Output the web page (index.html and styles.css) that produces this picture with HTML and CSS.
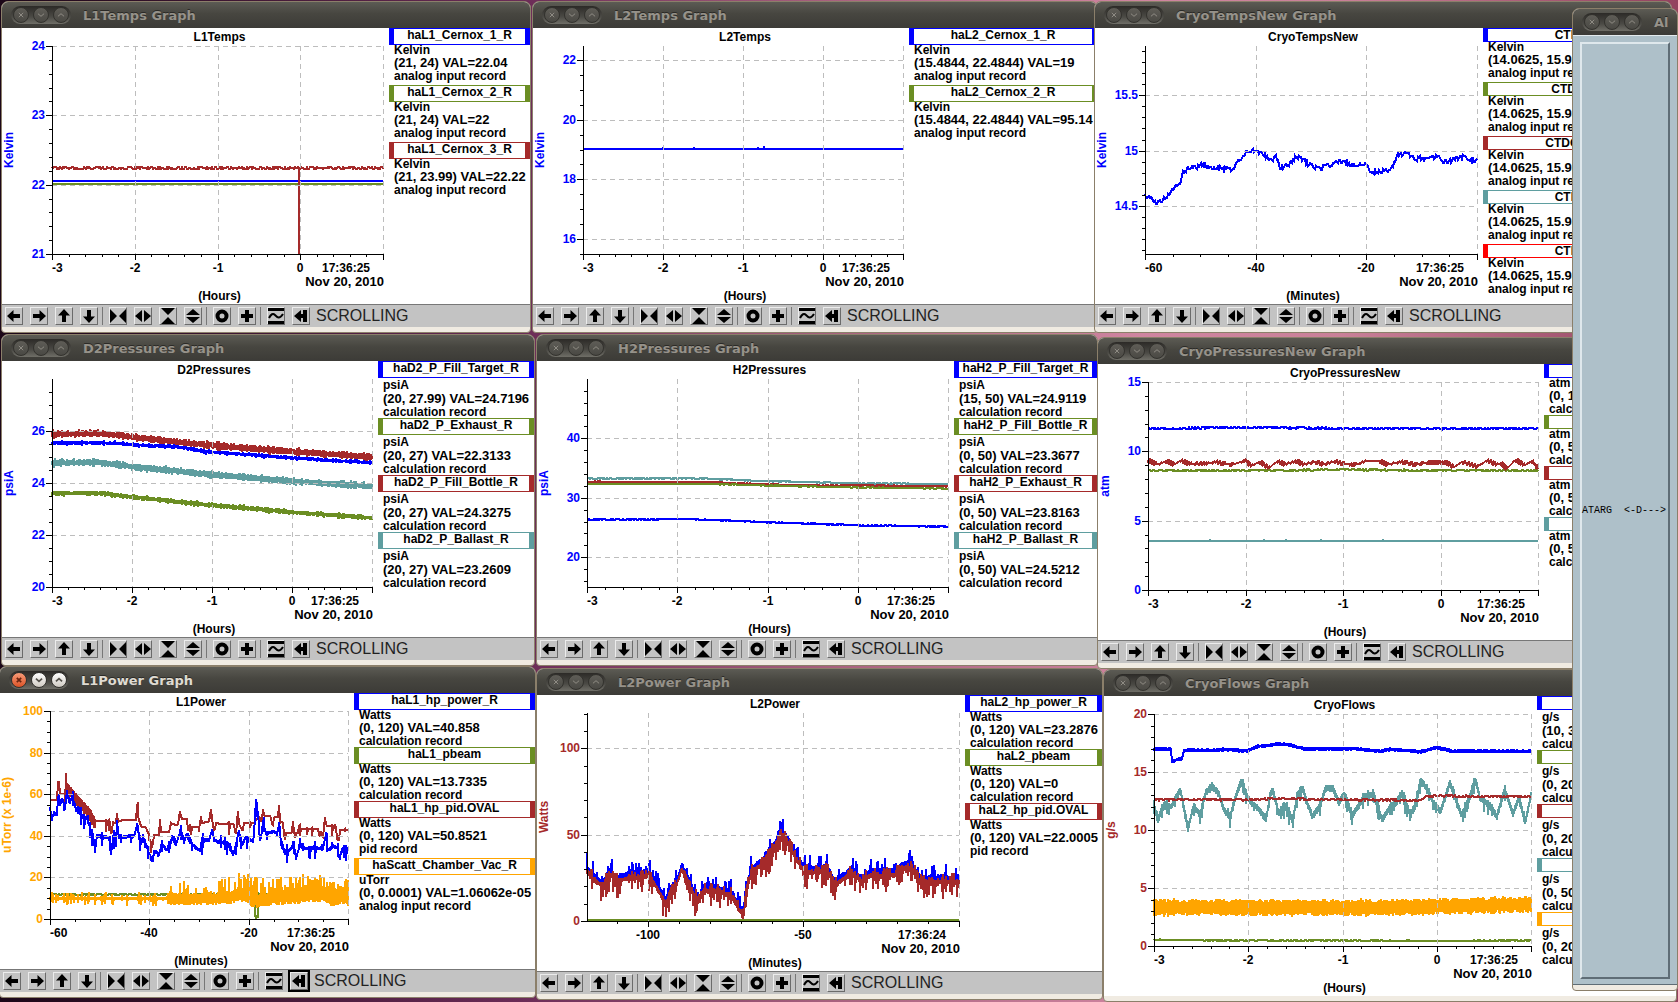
FILE: index.html
```
<!DOCTYPE html>
<html lang="en">
<head>
    <meta charset="UTF-8">
    <meta name="viewport" content="width=device-width, initial-scale=1.0">
    <title>Cryo Target Strip Charts</title>
    <link rel="stylesheet" href="styles.css">
</head>
<body>
    <main class="desktop" id="desktop">
        <section class="window alarm">
            <header class="titlebar">
                <div class="controls">
                    <button class="control" aria-label="Close"><svg viewBox="0 0 16 16"><path d="M5.5 5.5l5 5M10.5 5.5l-5 5"/></svg></button>
                    <button class="control" aria-label="Minimize"><svg viewBox="0 0 16 16"><path d="M4.500 6.500l3.500 3 3.500-3"/></svg></button>
                    <button class="control" aria-label="Maximize"><svg viewBox="0 0 16 16"><path d="M4.500 9.500l3.500-3 3.500 3"/></svg></button>
                </div>
                <h2 class="title">Al</h2>
            </header>
            <div class="alarm-body">
                <pre class="alarm-list">ATARG  &lt;-D---&gt;</pre>
            </div>
            <div class="window-foot"></div>
        </section>
    </main>

    <script src="charts.js"></script>
</body>
</html>
```
FILE: styles.css
```
* {
    box-sizing: border-box;
}
body {
    margin: 0;
    height: 100vh;
    overflow: hidden;
    font-family: "Liberation Sans", Arial, sans-serif;
    font-size: 12px;
    color: #000;
}
.desktop {
    position: relative;
    height: 100%;
    overflow: hidden;
    background: linear-gradient(90deg, #1c0718 0%, #2a0d22 6%, #6b2c57 31%, #a9627f 50%, #cf85a0 68%, #c98098 80%, #93425f 100%);
}

/* windows */
.window {
    position: absolute;
    display: flex;
    flex-direction: column;
    border: 1px solid #8b7f6a;
    border-radius: 7px 7px 4px 4px;
    background: #f0ebe2;
    overflow: hidden;
}
.titlebar {
    display: flex;
    align-items: center;
    gap: 12px;
    height: 26px;
    padding-left: 9px;
    background: linear-gradient(#5c5b54, #474640 45%, #3c3b37);
    flex: none;
}
.controls {
    display: flex;
    gap: 4px;
    padding: 1px 2px;
    height: 18px;
    border-radius: 9px;
    background: linear-gradient(#2c2a27, #4b4a45 60%, #6f6e67);
    flex: none;
}
.control {
    width: 16px;
    height: 16px;
    padding: 0;
    border: 1px solid #33322e;
    border-radius: 50%;
    background: linear-gradient(#5f5d57, #4a4944);
}
.control svg {
    display: block;
    width: 14px;
    height: 14px;
    fill: none;
    stroke: #97948b;
    stroke-width: 1;
}
.title {
    margin: 0;
    font-family: "DejaVu Sans", sans-serif;
    font-size: 13px;
    font-weight: bold;
    color: #96928a;
    text-shadow: 0 -1px 0 #2b2a27;
    white-space: nowrap;
}
.window.active .title {
    color: #dfdbd2;
}
.window.active .control {
    background: linear-gradient(#fff, #cfcac2);
}
.window.active .control svg {
    stroke: #55524c;
    stroke-width: 2;
}
.window.active .control:first-child {
    background: linear-gradient(#f79b78, #dd5327);
}
.window.active .control:first-child svg {
    stroke: #6b2410;
}
.window-body {
    display: flex;
    background: #fff;
}
.window-foot {
    height: 5px;
    flex: none;
}

/* strip chart */
.chart {
    flex: 1;
    min-width: 0;
    display: block;
}
.chart text {
    font-size: 12px;
    font-weight: bold;
}
.chart .date {
    font-size: 13px;
}
.mid {
    text-anchor: middle;
}
.end {
    text-anchor: end;
}
.axis {
    fill: none;
    stroke: #000;
    shape-rendering: crispEdges;
}
.grid {
    fill: none;
    stroke: #bdbdbd;
    stroke-dasharray: 5 4;
    shape-rendering: crispEdges;
}
.trace {
    fill: none;
    stroke-width: 2;
    shape-rendering: crispEdges;
}

/* legend */
.legend {
    flex: none;
    margin: 0;
    font-weight: bold;
    white-space: nowrap;
    overflow: hidden;
}
.name {
    height: 17px;
    border: 1px solid;
    border-width: 1px 5px;
    text-align: center;
    line-height: 12px;
}
.compact .name {
    height: 14px;
}
.name span {
    color: #000;
}
.legend p {
    margin: 0;
    padding-left: 5px;
}
.unit {
    line-height: 11px;
}
.tall .unit {
    line-height: 14px;
}
.range {
    font-size: 13px;
    line-height: 13px;
}
.record {
    line-height: 14px;
}

/* toolbar */
.toolbar {
    display: flex;
    align-items: center;
    height: 23px;
    padding-left: 3px;
    border-top: 1px solid #777;
    background: #c3c3c3;
}
.group {
    display: flex;
    gap: 7px;
}
.group + .group {
    margin-left: 5px;
    padding-left: 6px;
    box-shadow: -1px 0 0 #777;
}
.tool {
    width: 18px;
    height: 18px;
    padding: 0;
    border: 1px solid;
    border-color: #ececec #6b6b6b #6b6b6b #ececec;
    background: #c3c3c3;
}
.tool svg {
    display: block;
    width: 16px;
    height: 16px;
}
.tool.focused {
    outline: 2px solid #000;
}
.status {
    margin-left: 6px;
    font-size: 16px;
    color: #222;
}

/* alarm list, docked on the right edge over the charts */
.alarm {
    right: 0;
    top: 8px;
    width: 106px;
    height: 983px;
    z-index: 2;
}
.alarm-body {
    flex: 1;
    padding: 6px 7px 5px;
    background: #aec0c9;
    border-top: 1px solid #e4ebee;
    border-bottom: 1px solid #5f6d76;
    display: flex;
}
.alarm-list {
    flex: 1;
    margin: 0;
    display: flex;
    align-items: center;
    border: 2px solid;
    border-color: #dfe8ec #5f6d76 #5f6d76 #dfe8ec;
    font-family: "Liberation Mono", monospace;
    font-size: 10px;
}
```
FILE: charts.js
```
const BLUE = '#0000ff';
const GREEN = '#6b8e23';
const RED = '#a52a2a';
const TEAL = '#5f9ea0';
const ORANGE = '#ffa500';
const BRIGHT = '#ff0000';

const HOURS = { min: -3, max: 1, step: 1, minor: 0.2, last: 0, label: '(Hours)', time: '17:36:25' };
const MINUTES = { min: -60, max: 0, step: 20, minor: 5, last: -20, label: '(Minutes)', time: '17:36:25' };
const LONG = { min: -119.6, max: 0, step: 50, minor: 10, last: -50, label: '(Minutes)', time: '17:36:24' };

// legend row: colour, name, unit, range text, record type, row height
const row = (color, name, unit, range, record, h) => ({ color, name, unit, range, record, h });

const power = [-119.6,30,-117.4,25,-114.5,21,-112.1,28,-109.8,24,-106.2,26,-102.7,26,-99.8,28,-97.4,21,-94.2,11,-92.7,19,-90.9,21,-89.2,31,-87.4,25,-85,15,-83.3,13,-82.1,19,-76.8,18,-72.7,15,-70.9,8,-69.2,4,-68.4,18,-66.8,29,-62.7,35,-59.2,44,-56.8,51,-54.5,45,-52.1,36,-49.8,30,-46.2,29,-42.7,31,-39.8,22,-34.5,29,-31.5,24,-28,28,-25,27,-20.4,28,-18,32,-15,31,-12.1,23,-5.1,24,0,24];

// pts is a flat list: time, value, time, value ...
// lo/hi: random excursion under/over the line, up/down: occasional spikes
const charts = [
    {
        title: 'L1Temps', x: 1, y: 1, w: 530, legend: 141, unit: 'Kelvin', axisColor: BLUE,
        time: HOURS, min: 21, max: 24, step: 1, minor: 0.2,
        rows: [
            row(BLUE, 'haL1_Cernox_1_R', 'Kelvin', '(21, 24) VAL=22.04', 'analog input record', 57),
            row(GREEN, 'haL1_Cernox_2_R', 'Kelvin', '(21, 24) VAL=22', 'analog input record', 57),
            row(RED, 'haL1_Cernox_3_R', 'Kelvin', '(21, 23.99) VAL=22.22', 'analog input record', 57)
        ],
        series: [
            { color: GREEN, pts: [-3,22.01,1,22.01], lo: 0, hi: 0 },
            { color: BLUE, pts: [-3,22.055,1,22.055], lo: 0, hi: 0 },
            { color: RED, pts: [-3,22.24,1,22.24], lo: 0.01, hi: 0.01 },
            { color: RED, pts: [-0.02,22.24,-0.0199,21], drop: true }
        ]
    },
    {
        title: 'L2Temps', x: 532, y: 1, w: 566, legend: 188, unit: 'Kelvin', axisColor: BLUE,
        time: HOURS, min: 15.4844, max: 22.4844, step: 2, minor: 0.5,
        rows: [
            row(BLUE, 'haL2_Cernox_1_R', 'Kelvin', '(15.4844, 22.4844) VAL=19', 'analog input record', 57),
            row(GREEN, 'haL2_Cernox_2_R', 'Kelvin', '(15.4844, 22.4844) VAL=95.14', 'analog input record', 57)
        ],
        series: [{ color: BLUE, pts: [-3,19.03,1,19.03], lo: 0, hi: 0, up: 0.05, down: 0, chance: 0.04 }]
    },
    {
        title: 'CryoTempsNew', x: 1094, y: 1, w: 578, legend: 188, unit: 'Kelvin', axisColor: BLUE, size: 'compact',
        time: MINUTES, min: 14.0625, max: 15.9475, step: 0.5, minor: 0.1,
        rows: [
            row(BLUE, 'CTD101', 'Kelvin', '(14.0625, 15.9375) VAL=14.9', 'analog input record', 54),
            row(GREEN, 'CTD1020', 'Kelvin', '(14.0625, 15.9375) VAL=14.9', 'analog input record', 54),
            row(RED, 'CTDOUT10', 'Kelvin', '(14.0625, 15.9375) VAL=14.9', 'analog input record', 54),
            row(TEAL, 'CTD103', 'Kelvin', '(14.0625, 15.9375) VAL=14.9', 'analog input record', 54),
            row(BRIGHT, 'CTD104', 'Kelvin', '(14.0625, 15.9375) VAL=14.9', 'analog input record', 54)
        ],
        series: [{
            color: BLUE, lo: 0.012, hi: 0.012, up: 0.02, down: 0.02, chance: 0.25,
            pts: [-60,14.6,-59.2,14.58,-58,14.52,-56.1,14.58,-54.1,14.7,-53.6,14.71,-53.2,14.8,-52.3,14.84,-49.4,14.87,-48,14.84,-46.3,14.85,-44.4,14.83,-43.3,14.89,-42.1,14.97,-41.2,15,-40.2,14.99,-38.5,14.97,-37.2,14.9,-36.3,14.95,-35.5,14.84,-34.1,14.88,-32.2,14.94,-30.8,14.9,-29.2,14.84,-26.6,14.87,-24.7,14.9,-22.6,14.87,-20.2,14.88,-19.3,14.82,-18,14.81,-16.8,14.83,-15.6,14.81,-14.4,14.96,-12.4,14.97,-11.6,14.93,-9,14.92,-7.3,14.95,-6,14.9,-3.7,14.93,-2.2,14.96,-1.2,14.91,0,14.9]
        }]
    },
    {
        title: 'D2Pressures', x: 1, y: 334, w: 534, legend: 156, unit: 'psiA', axisColor: BLUE, size: 'tall',
        time: HOURS, min: 20, max: 27.99, step: 2, minor: 0.5,
        rows: [
            row(BLUE, 'haD2_P_Fill_Target_R', 'psiA', '(20, 27.99) VAL=24.7196', 'calculation record', 57),
            row(GREEN, 'haD2_P_Exhaust_R', 'psiA', '(20, 27) VAL=22.3133', 'calculation record', 57),
            row(RED, 'haD2_P_Fill_Bottle_R', 'psiA', '(20, 27) VAL=24.3275', 'calculation record', 57),
            row(TEAL, 'haD2_P_Ballast_R', 'psiA', '(20, 27) VAL=23.2609', 'calculation record', 57)
        ],
        series: [
            { color: TEAL, pts: [-3,24.77,-2.4,24.79,-2,24.62,-1,24.32,0,24.06,1,23.87], lo: 0.12, hi: 0.12, up: 0.07, down: 0.07, chance: 0.4, band: true },
            { color: GREEN, pts: [-3,23.6,-2.4,23.6,-2,23.46,-1,23.14,0,22.88,1,22.65], lo: 0.09, hi: 0.09, up: 0.05, down: 0.05, chance: 0.4, band: true },
            { color: RED, pts: [-3,25.88,-2.45,25.9,-2,25.77,-1.5,25.58,-1,25.44,0,25.2,1,25], lo: 0.12, hi: 0.12, up: 0.07, down: 0.07, chance: 0.4, band: true },
            { color: BLUE, pts: [-3,25.54,-2.2,25.52,-2,25.47,-1.4,25.37,-1.07,25.2,0,24.96,1,24.77], lo: 0.07, hi: 0.07, up: 0.05, down: 0.05, chance: 0.3, band: true }
        ]
    },
    {
        title: 'H2Pressures', x: 536, y: 334, w: 562, legend: 143, unit: 'psiA', axisColor: BLUE, size: 'tall',
        time: HOURS, min: 15, max: 49.99, step: 10, minor: 2,
        rows: [
            row(BLUE, 'haH2_P_Fill_Target_R', 'psiA', '(15, 50) VAL=24.9119', 'calculation record', 57),
            row(GREEN, 'haH2_P_Fill_Bottle_R', 'psiA', '(0, 50) VAL=23.3677', 'calculation record', 57),
            row(RED, 'haH2_P_Exhaust_R', 'psiA', '(0, 50) VAL=23.8163', 'calculation record', 57),
            row(TEAL, 'haH2_P_Ballast_R', 'psiA', '(0, 50) VAL=24.5212', 'calculation record', 57)
        ],
        series: [
            { color: TEAL, pts: [-3,33.24,-1.7,33.24,-1,32.8,0,32.45,1,32.3], lo: 0.05, hi: 0.05 },
            { color: RED, pts: [-3,32.7,-1.7,32.65,-0.8,32.15,1,31.95], lo: 0.06, hi: 0.06 },
            { color: GREEN, pts: [-3,32.35,-1.7,32.35,-0.4,31.85,1,31.55], lo: 0.05, hi: 0.05 },
            { color: BLUE, pts: [-3,26.3,-1.9,26.45,-1,25.9,0,25.4,1,25.15], lo: 0.06, hi: 0.06 }
        ]
    },
    {
        title: 'CryoPressuresNew', x: 1097, y: 337, w: 576, legend: 128, unit: 'atm', axisColor: BLUE, size: 'compact',
        time: HOURS, min: 0, max: 15, step: 5, minor: 1,
        rows: [
            row(BLUE, '', 'atm', '(0, 15', 'calc', 51),
            row(GREEN, '', 'atm', '(0, 50', 'calc', 51),
            row(RED, '', 'atm', '(0, 50', 'calc', 51),
            row(TEAL, '', 'atm', '(0, 50', 'calc', 51)
        ],
        series: [
            { color: BLUE, pts: [-3,11.65,-2,11.72,-1,11.66,0,11.62,1,11.64], lo: 0.05, hi: 0.05 },
            { color: GREEN, pts: [-3,8.6,-2,8.62,-1,8.66,1,8.6], lo: 0.04, hi: 0.05 },
            { color: TEAL, pts: [-3,3.53,1,3.53], lo: 0, hi: 0, up: 0.1, down: 0, chance: 0.08 },
            { color: RED, pts: [-3,9.35,-2.9,9.05,-2.81,9.3,-2.73,9.05,-2.66,9.35,-2.58,9.1,-2.4,9.1,-2.3,9.25,-2.22,9.1,-2.13,9.05,-2,9.35,-1.94,8.95,-1.85,9.25,-1.76,8.8,-1.67,9.3,-1.6,9.05,-1.48,9.3,-1.4,9.05,-1.29,9.25,-1.2,9.05,-1.08,9.3,-1,9.1,-0.86,9.05,-0.77,9.3,-0.62,9.3,-0.55,9.05,-0.4,9.25,-0.26,9.05,-0.12,9.2,0.06,9.2,0.14,8.85,0.22,9.25,0.38,8.9,0.48,9.35,0.58,9.05,0.62,9.15,0.68,8.75,0.77,9.4,0.86,9,0.94,9.3,1,8.8], lo: 0.07, hi: 0.07, band: true }
        ]
    },
    {
        title: 'L1Power', x: -1, y: 666, w: 537, legend: 181, unit: 'uTorr (x 1e-6)', axisColor: ORANGE, active: true,
        time: MINUTES, min: 0, max: 100, step: 20, minor: 5,
        rows: [
            row(BLUE, 'haL1_hp_power_R', 'Watts', '(0, 120) VAL=40.858', 'calculation record', 54),
            row(GREEN, 'haL1_pbeam', 'Watts', '(0, 120) VAL=13.7335', 'calculation record', 54),
            row(RED, 'haL1_hp_pid.OVAL', 'Watts', '(0, 120) VAL=50.8521', 'pid record', 57),
            row(ORANGE, 'haScatt_Chamber_Vac_R', 'uTorr', '(0, 0.0001) VAL=1.06062e-05', 'analog input record', 57)
        ],
        series: [
            { color: RED, pts: [-60,57,-58.6,57,-58.5,66,-58.2,66,-58,60,-57,60,-56.8,69,-56.6,64,-56.2,63,-54,57,-52,52,-51,47], lo: 5, hi: 1.5, band: true, from: -57 },
            { color: RED, pts: [-51,47,-47.9,47,-47.8,41,-47.6,41,-47.5,46,-46.7,46,-46.6,53,-46.5,46.5,-45.6,47.5,-42.7,47.5,-42.5,55,-42.3,55,-42.2,48,-41.6,44,-40.8,44,-40.2,41,-39.7,36,-39.3,36,-39.2,40.5,-38,40.5,-37.9,48,-37.7,42,-36,42,-35.7,46,-34.3,45,-33.8,53,-33.6,48,-32.4,48,-32.2,40,-32,46,-31.8,44,-29.9,44,-29.7,51,-29.5,46,-28,47,-27.6,53,-27.4,48,-26.9,41,-26.7,46,-23,45.5,-22.6,40,-22.4,46,-22.2,53,-22,46,-21.2,42,-21,46,-18.9,46,-18.4,48,-17.3,48,-17.1,54,-16.9,49.5,-15.6,49.5,-15.2,44,-14.9,49,-14.1,49,-13.9,55,-13.7,47,-13,46,-12.8,36,-12.5,41.5,-11.3,41.5,-11.1,48,-11,41.5,-10,41.5,-9.8,47,-9.6,43.5,-6,43.5,-5.7,38,-5.5,43,-5.1,38,-4.9,43,-4.6,50,-4.4,44.5,-2.4,44.5,-2.2,38,-1.8,38,-1.7,43,0,43], lo: 0, hi: 0, down: 6, up: 1.5, chance: 0.07, band: true },
            { color: BLUE, pts: [-60,53,-59.6,48,-59.2,51,-58.6,50,-58.3,62,-58,55,-57.5,58,-57,53,-56.6,61,-56,56,-55.5,59,-54.8,53,-54,51,-53,48,-52.4,49,-51.8,41,-51.2,39,-50.9,32,-50.6,40,-48,39,-47.7,31,-47.3,39,-46.7,40,-46.5,47,-46.2,39,-43,40,-42.4,46,-42,38,-41,38,-40,31,-39.4,28,-39,33,-38,31,-37.5,36,-36.5,33,-35.8,35,-35.4,40,-34.6,36,-33.6,43,-33,37,-32.5,41,-31.5,36,-30.5,34,-29.8,33,-29.2,38,-28,38,-27.3,43,-27,38,-26,37,-24,36,-23.2,31,-22.6,34,-22,43,-21.5,35,-20.6,39,-19,37,-18.6,55,-18.1,51,-17.8,38,-17.4,40,-17.1,47,-16.5,41,-15,42,-14.2,41,-13.9,46,-13.5,37,-12.6,31,-12,33,-11.3,34,-11,38,-10.5,29,-9.6,36,-9,34,-5,34,-4.4,41,-4,33,-3,35,-2,34,-1.7,28,-1.3,33,0,34], lo: 1, hi: 1, down: 5, up: 3, chance: 0.18, band: true },
            { color: GREEN, pts: [-60,11.7,-18.9,11.7,-18.8,1,-18.1,1,-18,11.7,0,12], lo: 0.4, hi: 0.4 },
            { color: ORANGE, pts: [-60,10,-36,9.8], lo: 1, hi: 0.8, down: 3, up: 2.5, chance: 0.35, band: true },
            { color: ORANGE, pts: [-36,9.5,-24,10], lo: 3, hi: 3, down: 0, up: 7, chance: 0.4, band: true },
            { color: ORANGE, pts: [-24,10,-22,12,-20,11,-19.5,9,-17,9,-15.5,10], lo: 3.5, hi: 3, down: 0, up: 9, chance: 0.5, band: true },
            { color: ORANGE, pts: [-15.5,10.5,-10,11,-7,12,-5,12,-3,10,-1.5,11,0,10], lo: 4, hi: 5, down: 0, up: 6, chance: 0.5, band: true }
        ]
    },
    {
        title: 'L2Power', x: 536, y: 668, w: 567, legend: 137, unit: 'Watts', axisColor: RED,
        time: LONG, min: 0, max: 120.4, step: 50, minor: 10,
        rows: [
            row(BLUE, 'haL2_hp_power_R', 'Watts', '(0, 120) VAL=23.2876', 'calculation record', 54),
            row(GREEN, 'haL2_pbeam', 'Watts', '(0, 120) VAL=0', 'calculation record', 54),
            row(RED, 'haL2_hp_pid.OVAL', 'Watts', '(0, 120) VAL=22.0005', 'pid record', 57)
        ],
        series: [
            { color: BLUE, pts: power, lo: 1, hi: 3, down: 0, up: 7, chance: 0.25, band: true },
            { color: RED, pts: power, lo: 3, hi: 0, down: 9, up: 4, chance: 0.4, band: true },
            { color: GREEN, pts: [-119.6,0.5,0,0.5], lo: 0, hi: 0 }
        ]
    },
    {
        title: 'CryoFlows', x: 1103, y: 669, w: 574, legend: 139, unit: 'g/s', axisColor: RED, size: 'compact tall', height: 300, bare: true,
        time: HOURS, min: 0, max: 20, step: 5, minor: 1,
        rows: [
            row(BLUE, '', 'g/s', '(10, 30) VAL=16.8', 'calculation record', 54),
            row(GREEN, '', 'g/s', '(0, 20) VAL=0.4', 'calculation record', 54),
            row(RED, '', 'g/s', '(0, 20) VAL=12.9', 'calculation record', 54),
            row(TEAL, '', 'g/s', '(0, 50) VAL=12.4', 'calculation record', 54),
            row(ORANGE, '', 'g/s', '(0, 20) VAL=3.6', 'calculation record', 54)
        ],
        series: [
            { color: BLUE, pts: [-3,16.97,-2.82,16.97,-2.81,15.9,-2.7,16.2,-2.68,16.9,-2.4,16.85,-2.25,16.95,-2.01,16.8,-1.9,17.2,-1.7,17.4,-1.56,17.35,-1.4,16.97,-0.86,17,-0.6,16.8,-0.5,16.95,-0.17,16.75,0,17.1,0.16,16.8,1,16.78], lo: 0.18, hi: 0.18, band: true },
            { color: TEAL, lo: 0.35, hi: 0.3, down: 0.8, up: 0.3, chance: 0.25, band: true,
              pts: [-3,12.1,-2.96,10.9,-2.9,12.1,-2.82,12,-2.72,13.5,-2.68,11.8,-2.64,10.1,-2.58,12.1,-2.51,11.3,-2.45,13.3,-2.38,13.8,-2.31,13.1,-2.25,11.6,-2.19,11.2,-2.13,13,-2.07,14.3,-2.02,13,-1.97,12.4,-1.89,11.8,-1.81,10.9,-1.77,13,-1.74,13.5,-1.68,11.5,-1.6,12.1,-1.53,10.8,-1.48,13,-1.42,13.6,-1.38,12.4,-1.32,11.2,-1.24,12.1,-1.18,13.6,-1.1,13.6,-1.04,12.4,-0.98,13.1,-0.9,11.3,-0.85,11.8,-0.77,12.9,-0.67,13.1,-0.58,10.9,-0.51,11.8,-0.43,12.4,-0.37,13.2,-0.28,11.3,-0.23,12.1,-0.17,14.3,-0.09,13.4,-0.04,12.4,0.04,11.6,0.14,14.1,0.2,12.7,0.26,11.3,0.32,12.1,0.41,14.4,0.46,12.7,0.54,12.3,0.64,11.2,0.72,13.5,0.81,11.4,0.87,12.8,0.94,10.7,1,13] },
            { color: RED, pts: [-3,12.6,-2,12.6,-1.6,12.75,-1.3,12.6,-0.6,12.6,-0.18,12.55,-0.13,12.85,0,12.95,1,12.85], lo: 0.06, hi: 0.06 },
            { color: ORANGE, pts: [-3,3.35,-1,3.3,0,3.42,1,3.62], lo: 0.75, hi: 0.7, up: 0.1, down: 0.1, chance: 0.3, band: true },
            { color: GREEN, pts: [-3,0.53,-2,0.48,0,0.43,1,0.45], lo: 0.04, hi: 0.04 }
        ]
    }
];

const windowIcons = {
    Close: '<path d="M5.5 5.5l5 5M10.5 5.5l-5 5"/>',
    Minimize: '<path d="M4.500 6.500l3.500 3 3.500-3"/>',
    Maximize: '<path d="M4.500 9.500l3.500-3 3.500 3"/>'
};

const toolGroups = [
    {
        'Scroll left': '<path d="M1 8l6.500-6v4H14v4H7.500v4z"/>',
        'Scroll right': '<path d="M15 8L8.500 2v4H2v4h6.500v4z"/>',
        'Scroll up': '<path d="M8 1l6 6.500h-4V14H6V7.500H2z"/>',
        'Scroll down': '<path d="M8 15l6-6.500h-4V2H6v6.500H2z"/>'
    },
    {
        'Zoom in time': '<path d="M0 1l7 7-7 7zM16 1L9 8l7 7z"/>',
        'Zoom out time': '<path d="M7 2v12L0 8zM9 2v12l7-6z"/>',
        'Zoom in values': '<path d="M1 0h14L8 7zM1 16h14L8 9z"/>',
        'Zoom out values': '<path d="M1 7h14L8 1zM1 9h14l-7 6z"/>'
    },
    {
        'Reset': '<circle cx="8" cy="8" r="4.500" fill="none" stroke="#000" stroke-width="4"/>',
        'Center': '<path d="M6 2h4v4h4v4h-4v4H6v-4H2V6h4z"/>'
    },
    {
        'Auto scale': '<path d="M0 0h16v3H0zM0 13h16v3H0z"/><path d="M1 10c2-4 4-5 6-3s4 5 8-1" fill="none" stroke="#000" stroke-width="2"/>',
        'Auto scroll': '<path d="M1 8l7-6v4h2V2h4v12h-4v-4H8v4z"/>'
    }
];

// small seeded generator, so the traces look the same on every load
let seed = 7;
function random() {
    seed = (seed * 16807) % 2147483647;
    return seed / 2147483647;
}

function valueAt(pts, t) {
    for (let i = 2; i < pts.length; i += 2) {
        if (t <= pts[i]) {
            const k = (t - pts[i - 2]) / (pts[i] - pts[i - 2]);
            return pts[i - 1] + k * (pts[i + 1] - pts[i - 1]);
        }
    }
    return pts[pts.length - 1];
}

function tracePath(s, sx, sy, min) {
    const first = Math.round(sx(s.pts[0]));
    const last = Math.round(sx(s.pts[s.pts.length - 2]));
    const clampY = v => Math.round(sy(Math.max(v, min)));
    if (s.drop) {
        return '<path class="trace" stroke="' + s.color + '" d="M' + first + ' ' + clampY(s.pts[1]) + 'V' + clampY(s.pts[3]) + '"/>';
    }
    const tAt = x => s.pts[0] + (x - first) / (last - first) * (s.pts[s.pts.length - 2] - s.pts[0]);
    let d = '';
    for (let x = first; x <= last; x++) {
        const t = tAt(x);
        const v = valueAt(s.pts, t);
        const quiet = s.from !== undefined && t < s.from;
        let hi = quiet ? 0 : s.hi * (0.6 + 0.4 * random());
        let lo = quiet ? 0 : s.lo * (0.6 + 0.4 * random());
        if (s.chance && random() < s.chance) {
            hi += s.up * random();
            lo += s.down * random();
        }
        if (s.band) {
            d += (d ? 'L' : 'M') + x + ' ' + clampY(v + hi) + 'V' + clampY(v - lo);
        } else {
            d += (d ? 'L' : 'M') + x + ' ' + clampY(random() < 0.5 ? v + hi : v - lo);
        }
    }
    return '<path class="trace" stroke="' + s.color + '" d="' + d + '"/>';
}

function ticks(min, max, step) {
    const list = [];
    for (let i = Math.ceil(min / step - 0.001); i * step <= max + 0.001; i++) {
        list.push(Math.round(i * step * 1000) / 1000);
    }
    return list;
}

function drawChart(c) {
    const width = c.w - 2 - c.legend;
    const height = c.height || 276;
    const left = 50, right = width - 6, top = 18, bottom = height - 50;
    const center = (left + right) / 2 + 2;
    const time = c.time;
    const sx = t => left + (t - time.min) / (time.max - time.min) * (right - left);
    const sy = v => bottom - (v - c.min) / (c.max - c.min) * (bottom - top);
    const px = n => Math.round(n) + 0.5;
    let grid = '', axis = '', labels = '';

    ticks(time.min, time.max, time.step).forEach(t => {
        grid += 'M' + px(sx(t)) + ' ' + top + 'V' + bottom;
        axis += 'M' + px(sx(t)) + ' ' + bottom + 'v6';
        if (t > time.last) return;
        const edge = t === time.min;
        labels += '<text class="' + (edge ? '' : 'mid') + '" x="' + Math.round(sx(t)) + '" y="' + (bottom + 18) + '">' + t + '</text>';
    });
    ticks(time.min, time.max, time.minor).forEach(t => {
        axis += 'M' + px(sx(t)) + ' ' + bottom + 'v3';
    });
    ticks(c.min, c.max, c.step).forEach(v => {
        grid += 'M' + left + ' ' + px(sy(v)) + 'H' + right;
        axis += 'M' + left + ' ' + px(sy(v)) + 'h-6';
        labels += '<text class="end" fill="' + c.axisColor + '" x="43" y="' + (Math.round(sy(v)) + 4) + '">' + v + '</text>';
    });
    ticks(c.min, c.max, c.minor).forEach(v => {
        axis += 'M' + left + ' ' + px(sy(v)) + 'h-3';
    });
    axis += 'M' + (left + 0.5) + ' ' + top + 'V' + bottom + 'M' + left + ' ' + (bottom + 0.5) + 'H' + (right + 1);

    const middle = (top + bottom) / 2;
    return '<svg class="chart" width="' + width + '" height="' + height + '">' +
        '<text class="mid" x="' + center + '" y="13">' + c.title + '</text>' +
        '<text class="mid" fill="' + c.axisColor + '" transform="translate(11 ' + middle + ') rotate(-90)">' + c.unit + '</text>' +
        c.series.map(s => tracePath(s, sx, sy, c.min)).join('') +
        '<path class="grid" d="' + grid + '"/>' +
        '<path class="axis" d="' + axis + '"/>' + labels +
        '<text class="mid" x="' + (right - 37) + '" y="' + (bottom + 18) + '">' + time.time + '</text>' +
        '<text class="end date" x="' + (right + 1) + '" y="' + (bottom + 32) + '">Nov 20, 2010</text>' +
        '<text class="mid" x="' + center + '" y="' + (bottom + 46) + '">' + time.label + '</text>' +
        '</svg>';
}

function drawLegend(c) {
    return '<div class="legend ' + (c.size || '') + '" style="width:' + c.legend + 'px">' + c.rows.map(r =>
        '<div style="height:' + r.h + 'px">' +
        '<div class="name" style="border-color:' + r.color + '"><span>' + r.name + '</span></div>' +
        '<p class="unit">' + r.unit + '</p><p class="range">' + r.range + '</p><p class="record">' + r.record + '</p>' +
        '</div>').join('') + '</div>';
}

function drawToolbar(c) {
    return '<div class="toolbar">' + toolGroups.map(group =>
        '<div class="group">' + Object.keys(group).map(name => {
            const focused = c.active && name === 'Auto scroll' ? ' focused' : '';
            return '<button class="tool' + focused + '" aria-label="' + name + '"><svg viewBox="0 0 16 16">' + group[name] + '</svg></button>';
        }).join('') + '</div>').join('') + '<span class="status">SCROLLING</span></div>';
}

function drawWindow(c) {
    const el = document.createElement('section');
    el.className = 'window' + (c.active ? ' active' : '');
    el.style.left = c.x + 'px';
    el.style.top = c.y + 'px';
    el.style.width = c.w + 'px';
    el.innerHTML =
        '<header class="titlebar"><div class="controls">' +
        Object.keys(windowIcons).map(name =>
            '<button class="control" aria-label="' + name + '"><svg viewBox="0 0 16 16">' + windowIcons[name] + '</svg></button>').join('') +
        '</div><h2 class="title">' + c.title + ' Graph</h2></header>' +
        '<div class="window-body">' + drawChart(c) + drawLegend(c) + '</div>' +
        (c.bare ? '' : drawToolbar(c)) +
        '<div class="window-foot"></div>';
    document.getElementById('desktop').appendChild(el);
}

charts.forEach(drawWindow);
```
